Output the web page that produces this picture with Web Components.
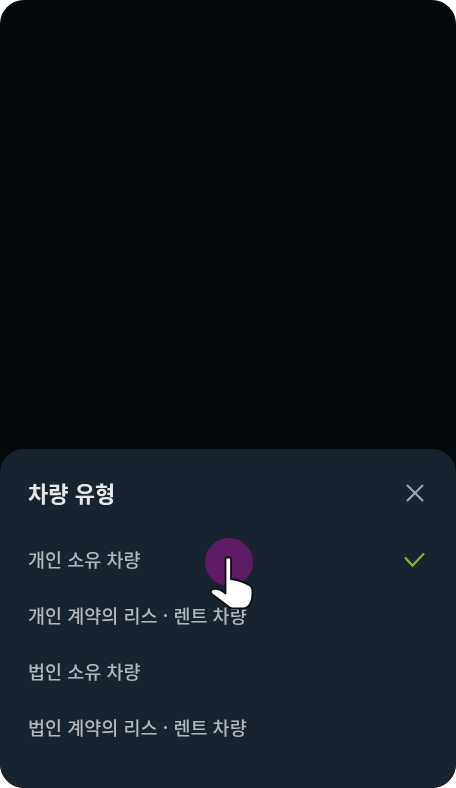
<!doctype html>
<html lang="ko"><head><meta charset="utf-8">
<style>html,body{margin:0;padding:0;background:#fff;width:456px;height:788px;overflow:hidden}</style>
</head><body>
<phone-screen>
  <type-sheet title="차량 유형">
    <type-option selected>개인 소유 차량</type-option>
    <type-option>개인 계약의 리스 · 렌트 차량</type-option>
    <type-option>법인 소유 차량</type-option>
    <type-option>법인 계약의 리스 · 렌트 차량</type-option>
  </type-sheet>
  <touch-pointer></touch-pointer>
</phone-screen>
<script>
const FONT='"Noto Sans CJK KR","Noto Sans",sans-serif';
customElements.define('phone-screen',class extends HTMLElement{constructor(){super();this.attachShadow({mode:'open'}).innerHTML=`<style>
:host{display:flex;flex-direction:column;justify-content:flex-end;position:relative;width:456px;height:788px;background:#02080c;border-radius:24px;overflow:hidden;font-family:${FONT}}
</style><slot></slot>`}});
customElements.define('type-sheet',class extends HTMLElement{constructor(){super();this.attachShadow({mode:'open'}).innerHTML=`<style>
:host{display:block;background:#17232e;border-radius:24px;padding:0 28px 32px}
header{display:flex;align-items:center;justify-content:space-between;height:83px;padding-top:4px;box-sizing:border-box}
h2{margin:-2px 0 0;font-size:22px;line-height:28px;font-weight:700;color:#e6e8ea;filter:blur(.75px)}
svg{display:block;filter:blur(.6px);margin-right:4px}
</style><header><h2></h2><svg width="18" height="18" viewBox="0 0 18 18" fill="none" stroke="#a3a8ad" stroke-width="2"><path d="M1 1 17 17M17 1 1 17"/></svg></header><slot></slot>`;
this.shadowRoot.querySelector('h2').textContent=this.getAttribute('title')}});
customElements.define('type-option',class extends HTMLElement{constructor(){super();this.attachShadow({mode:'open'}).innerHTML=`<style>
:host{display:flex;align-items:center;justify-content:space-between;height:56px}
span{margin-top:-2px;font-size:18.500px;line-height:24px;font-weight:500;color:#b4b8bc;filter:blur(.75px);white-space:nowrap}
svg{display:none;filter:blur(.5px);margin-right:3px}
:host([selected]) svg{display:block}
</style><span><slot></slot></span><svg width="21" height="16" viewBox="0 0 21 16" fill="none" stroke="#7db33a" stroke-width="2.400"><path d="M1 5.500 8.500 13.500 20 1.500"/></svg>`}});
customElements.define('touch-pointer',class extends HTMLElement{constructor(){super();this.attachShadow({mode:'open'}).innerHTML=`<style>
:host{position:absolute;left:205px;top:538px;width:56px;height:76px;display:block}
i{position:absolute;left:0;top:0;width:48px;height:48px;border-radius:50%;background:#5e1b66;filter:blur(.6px)}
svg{position:absolute;left:0;top:0;filter:blur(.6px)}
</style><i></i><svg width="56" height="76" viewBox="0 0 56 76"><path d="M20.500 21.500C20.500 18.500 26 18.500 26 21.500V41C31 41.500 39 44 44 47C47 48.500 47.500 51 47.500 54C47.500 59 47 63 45 66C43 69.500 41 70.500 38 70.500H28C25.500 70.500 24 69.500 22 67.500L8 57C5 55 5 52 8.500 51C12.500 50.500 17 52.500 20.500 55.500Z" fill="#fff" stroke="#0b0f13" stroke-width="1.800" stroke-linejoin="round"/></svg>`}});
</script>
</body></html>
